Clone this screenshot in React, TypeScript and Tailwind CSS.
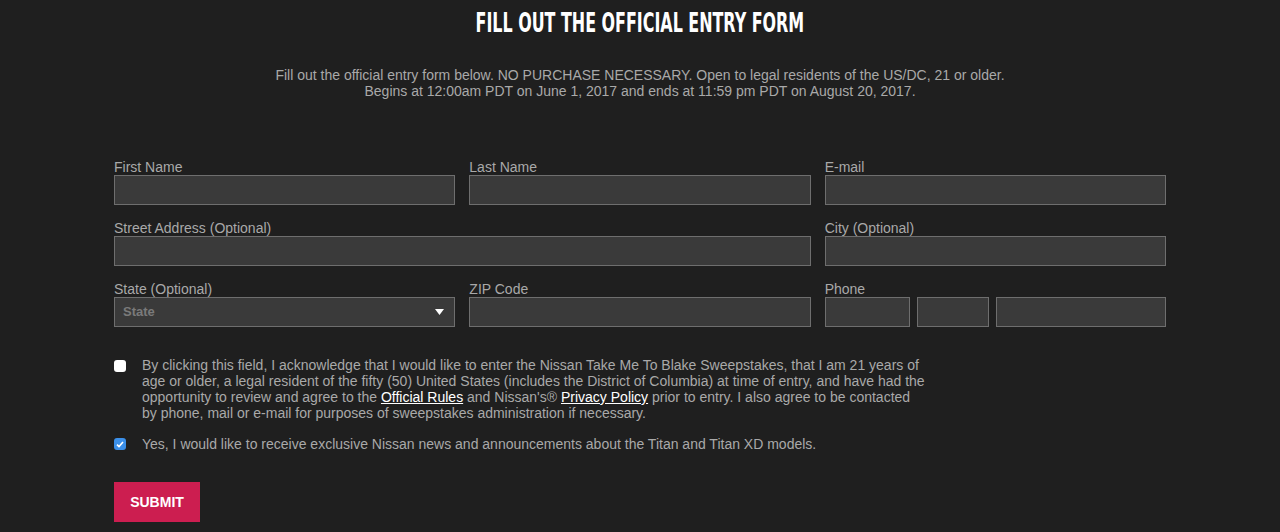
import React from "react";

const inputCls = "h-[30px] w-full border border-[#6e6e6e] bg-[#3a3a3a] outline-none";

function Field({ label, className = "", children }: { label: string; className?: string; children?: React.ReactNode }) {
  return (
    <div className={className}>
      <label className="block h-[17px] text-[14px] leading-[19px] text-[#a9a9a9]">{label}</label>
      {children ?? <input className={inputCls} />}
    </div>
  );
}

export default function App() {
  return (
    <div className="min-h-[532px] bg-[#1f1f1f] font-['Liberation_Sans',Arial,sans-serif]">
      <div className="pt-[6px] text-center">
        <h1 className="inline-block scale-x-[0.655] font-['DejaVu_Sans_Condensed','DejaVu_Sans',sans-serif] text-[27px] leading-[34px] font-bold whitespace-nowrap text-white">
          FILL OUT THE OFFICIAL ENTRY FORM
        </h1>
      </div>
      <p className="mt-[27px] text-center text-[14px] leading-[16px] text-[#a9a9a9]">
        Fill out the official entry form below. NO PURCHASE NECESSARY. Open to legal residents of the US/DC, 21 or older.
        <br />
        Begins at 12:00am PDT on June 1, 2017 and ends at 11:59 pm PDT on August 20, 2017.
      </p>

      <form className="mx-auto mt-[59px] w-[1052px]">
        <div className="grid grid-cols-3 gap-x-[14px] gap-y-[14px]">
          <Field label="First Name" />
          <Field label="Last Name" />
          <Field label="E-mail" />
          <Field label="Street Address (Optional)" className="col-span-2" />
          <Field label="City (Optional)" />
          <Field label="State (Optional)">
            <div className={`${inputCls} flex items-center justify-between px-[8px]`}>
              <span className="text-[13px] font-bold text-[#7a7a7a]">State</span>
              <svg width="9" height="6" viewBox="0 0 9 6" className="mr-[2px]">
                <path d="M0 0h9L4.5 6z" fill="#ffffff" />
              </svg>
            </div>
          </Field>
          <Field label="ZIP Code" />
          <Field label="Phone">
            <div className="flex gap-[7px]">
              <input className={`${inputCls} !w-[85px]`} />
              <input className={`${inputCls} !w-[72px]`} />
              <input className={`${inputCls} flex-1`} />
            </div>
          </Field>
        </div>

        <div className="mt-[30px] flex items-start gap-[16px]">
          <span className="mt-[3px] h-[12px] w-[12px] shrink-0 rounded-[3px] bg-white" />
          <p className="w-[785px] text-[14px] leading-[16px] text-[#a9a9a9]">
            By clicking this field, I acknowledge that I would like to enter the Nissan Take Me To Blake Sweepstakes, that I am 21 years of
            age or older, a legal resident of the fifty (50) United States (includes the District of Columbia) at time of entry, and have had the
            opportunity to review and agree to the <a className="text-white underline">Official Rules</a> and Nissan's®{" "}
            <a className="text-white underline">Privacy Policy</a> prior to entry. I also agree to be contacted by phone, mail or e-mail for
            purposes of sweepstakes administration if necessary.
          </p>
        </div>

        <div className="mt-[15px] flex items-start gap-[16px]">
          <span className="mt-[2px] flex h-[12px] w-[12px] shrink-0 items-center justify-center rounded-[3px] bg-[#3b8fe8]">
            <svg width="8" height="7" viewBox="0 0 8 7">
              <path d="M1 3.6l2 2L7 1" stroke="#fff" strokeWidth="1.6" fill="none" />
            </svg>
          </span>
          <p className="text-[14px] leading-[16px] text-[#a9a9a9]">
            Yes, I would like to receive exclusive Nissan news and announcements about the Titan and Titan XD models.
          </p>
        </div>

        <button type="button" className="mt-[30px] h-[40px] w-[86px] bg-[#cc1e50] text-[14px] font-bold text-white">
          SUBMIT
        </button>
      </form>
    </div>
  );
}
